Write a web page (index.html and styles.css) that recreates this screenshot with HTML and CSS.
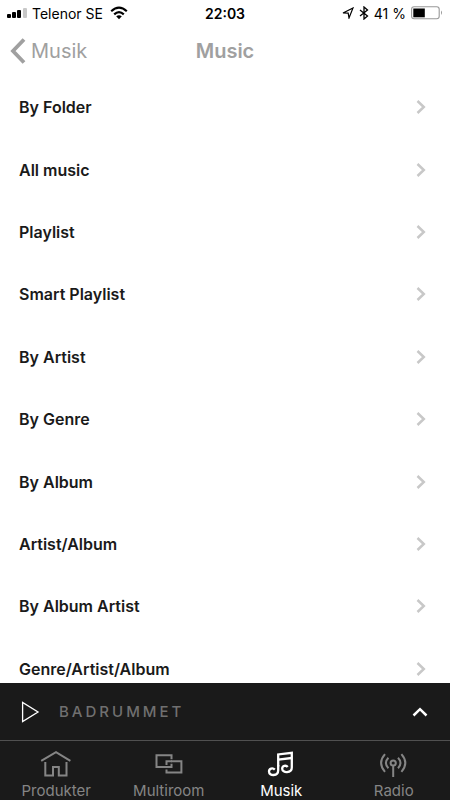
FILE: index.html
```html
<!DOCTYPE html>
<html lang="sv">
<head>
<meta charset="utf-8">
<meta name="viewport" content="width=device-width, initial-scale=1">
<title>Music</title>
<link rel="stylesheet" href="styles.css">
</head>
<body>
<svg width="0" height="0" class="defs" aria-hidden="true">
  <symbol id="chevron" viewBox="0 0 10 16"><path d="M1.5 2L7.8 8L1.5 14" fill="none" stroke="currentColor" stroke-width="2.5"/></symbol>
</svg>
<div class="status">
  <div class="status-left">
    <svg width="20" height="12" viewBox="0 0 20 12" aria-hidden="true"><rect x="0" y="7" width="4" height="4" rx="1"/><rect x="5" y="5" width="4" height="6" rx="1"/><rect x="10" y="3" width="4" height="8" rx="1"/><rect x="16" y="1" width="4" height="10" rx="1" fill="#c8c8c8"/></svg>
    <span>Telenor SE</span>
    <svg class="wifi" width="18" height="14" viewBox="0 0 18 14" aria-hidden="true"><g fill="none" stroke="#000" stroke-width="2.2"><path d="M1.2 5.2Q9-1.8 16.8 5.2"/><path d="M4.2 8.4Q9 4 13.8 8.4"/></g><path d="M6.2 10.3Q9 8.2 11.8 10.3L9 13.2z"/></svg>
  </div>
  <strong class="clock">22:03</strong>
  <div class="status-right">
    <svg width="12" height="12" viewBox="0 0 12 12" aria-hidden="true"><path d="M1 6L11 1L7 11L6.2 6.2z" fill="none" stroke="#000" stroke-width="1.2"/></svg>
    <svg width="10" height="14" viewBox="0 0 10 14" aria-hidden="true"><path d="M1 4L8.5 10L5 13V1L8.5 4L1 10" fill="none" stroke="#000" stroke-width="1.3"/></svg>
    <span>41 %</span>
    <svg width="32" height="14" viewBox="0 0 32 14" aria-hidden="true"><rect x=".6" y=".8" width="27.6" height="12" rx="2.5" fill="none" stroke="#999" stroke-width="1.1"/><rect x="2.3" y="2.5" width="11.5" height="8.8"/><path d="M30 4.6Q32 6.8 30 9z" fill="#999"/></svg>
  </div>
</div>
<header class="header">
  <a class="back" href="#"><svg width="16" height="26" viewBox="0 0 16 26" aria-hidden="true"><path d="M14 1.5L3 13L14 24.5" fill="none" stroke="currentColor" stroke-width="3.8"/></svg>Musik</a>
  <h1 class="title">Music</h1>
</header>
<main class="content">
  <nav class="list" aria-label="Music">
    <a class="row" href="#">By Folder<svg class="chev"><use href="#chevron"/></svg></a>
    <a class="row" href="#">All music<svg class="chev"><use href="#chevron"/></svg></a>
    <a class="row" href="#">Playlist<svg class="chev"><use href="#chevron"/></svg></a>
    <a class="row" href="#">Smart Playlist<svg class="chev"><use href="#chevron"/></svg></a>
    <a class="row" href="#">By Artist<svg class="chev"><use href="#chevron"/></svg></a>
    <a class="row" href="#">By Genre<svg class="chev"><use href="#chevron"/></svg></a>
    <a class="row" href="#">By Album<svg class="chev"><use href="#chevron"/></svg></a>
    <a class="row" href="#">Artist/Album<svg class="chev"><use href="#chevron"/></svg></a>
    <a class="row" href="#">By Album Artist<svg class="chev"><use href="#chevron"/></svg></a>
    <a class="row" href="#">Genre/Artist/Album<svg class="chev"><use href="#chevron"/></svg></a>
  </nav>
</main>
<section class="player">
  <button class="icon-button" type="button" aria-label="Play"><svg width="20" height="22" viewBox="0 0 20 22"><path d="M2.6 1.5V20.5L18 11z" fill="none" stroke="#fff" stroke-width="1.3"/></svg></button>
  <span class="room">BADRUMMET</span>
  <button class="icon-button" type="button" aria-label="Expand"><svg width="16" height="10" viewBox="0 0 16 10"><path d="M1.5 8.5L8 2.2L14.5 8.5" fill="none" stroke="#fff" stroke-width="2.5"/></svg></button>
</section>
<nav class="tabs" aria-label="Tabs">
  <a class="tab" href="#"><svg width="32" height="28" viewBox="0 0 32 28" aria-hidden="true"><g fill="none" stroke="currentColor" stroke-width="2"><path d="M1.2 10.8L16 2.2L30.4 10.8"/><path d="M5.3 12V25.5H13V17H18.8V25.5H26.5V12"/></g></svg>Produkter</a>
  <a class="tab" href="#"><svg width="32" height="28" viewBox="0 0 32 28" aria-hidden="true"><g fill="none" stroke="currentColor" stroke-width="2"><path d="M18.5 9.2V5.2H3.5V17H18.5V13.8"/><path d="M18 11.2H28.4V22.6H13.5V19.4"/><path d="M13.5 15V11.2H19"/></g></svg>Multiroom</a>
  <a class="tab active" href="#" aria-current="page"><svg width="32" height="28" viewBox="0 0 32 28" aria-hidden="true"><g fill="none" stroke="currentColor" stroke-width="2.3"><path d="M13.2 16.5V4.4L26.8 2.8V17.5C26.8 23.4 17.2 23.4 17.2 18.7C17.2 15.8 21 14.8 22.7 17"/><path d="M13.2 9.6L26.8 8"/><path d="M13.2 15V20.2C13.2 26.5 4 26.3 4 21.5C4 18.6 7.6 17.3 9.8 19.6"/></g></svg>Musik</a>
  <a class="tab" href="#"><svg width="32" height="28" viewBox="0 0 32 28" aria-hidden="true"><g fill="none" stroke="currentColor" stroke-width="2"><circle cx="15.2" cy="13" r="2.6"/><path d="M15.2 15.5V27"/><path d="M10.4 18.2Q5.4 13 10.4 7.8M20 18.2Q25 13 20 7.8M7 21.8Q-.8 13 7 4.2M23.4 21.8Q31.2 13 23.4 4.2"/></g></svg>Radio</a>
</nav>
</body>
</html>
```
FILE: styles.css
```css
* {
  box-sizing: border-box;
}

body {
  margin: 0;
  height: 100vh;
  display: flex;
  flex-direction: column;
  overflow: hidden;
  background: #fff;
  color: #1a1a1a;
  font-family: Inter, "Liberation Sans", sans-serif;
}

a {
  color: inherit;
  text-decoration: none;
}

svg {
  display: block;
  flex: none;
}

.defs {
  position: absolute;
}

.status,
.header {
  display: grid;
  grid-template-columns: 1fr auto 1fr;
  align-items: center;
}

.status {
  height: 26px;
  padding: 0 7px;
  color: #000;
  font-size: 14px;
}

.status-left,
.status-right {
  display: flex;
  align-items: center;
  gap: 5px;
}

.status-right {
  justify-content: flex-end;
}

.wifi {
  margin-left: 2px;
}

.clock {
  font-weight: 600;
}

.header {
  height: 50px;
  padding: 0 10px;
  color: #a0a0a0;
  font-size: 20px;
}

.back {
  display: flex;
  align-items: center;
  gap: 5px;
}

.title {
  margin: 0;
  font-size: 20px;
  font-weight: 600;
}

.content {
  flex: 1;
  min-height: 0;
  display: flex;
  flex-direction: column;
  overflow: hidden;
}

/* The last row runs on under the player. */
.list {
  flex: 1;
  display: flex;
  flex-direction: column;
  margin-bottom: -17px;
}

.row {
  flex: 1 0 62px;
  display: flex;
  align-items: center;
  justify-content: space-between;
  padding: 0 24px 0 19px;
  font-size: 16px;
  font-weight: 600;
}

.chev {
  width: 10px;
  height: 16px;
  color: #c8c8c8;
}

.player {
  flex: none;
  height: 57px;
  display: flex;
  align-items: center;
  gap: 19px;
  padding: 0 22px 0 20px;
  background: #1a1a1a;
}

.icon-button {
  padding: 0;
  border: 0;
  background: none;
}

.room {
  flex: 1;
  color: #707070;
  font-size: 15px;
  font-weight: 500;
  letter-spacing: 3px;
}

.tabs {
  flex: none;
  height: 60px;
  display: grid;
  grid-template-columns: repeat(4, 1fr);
  border-top: 1px solid #505050;
  background: #1a1a1a;
  color: #858585;
}

.tab {
  display: flex;
  flex-direction: column;
  align-items: center;
  padding-top: 9px;
  gap: 4px;
  font-size: 15px;
  line-height: 18px;
}

.active {
  color: #fff;
}
```
